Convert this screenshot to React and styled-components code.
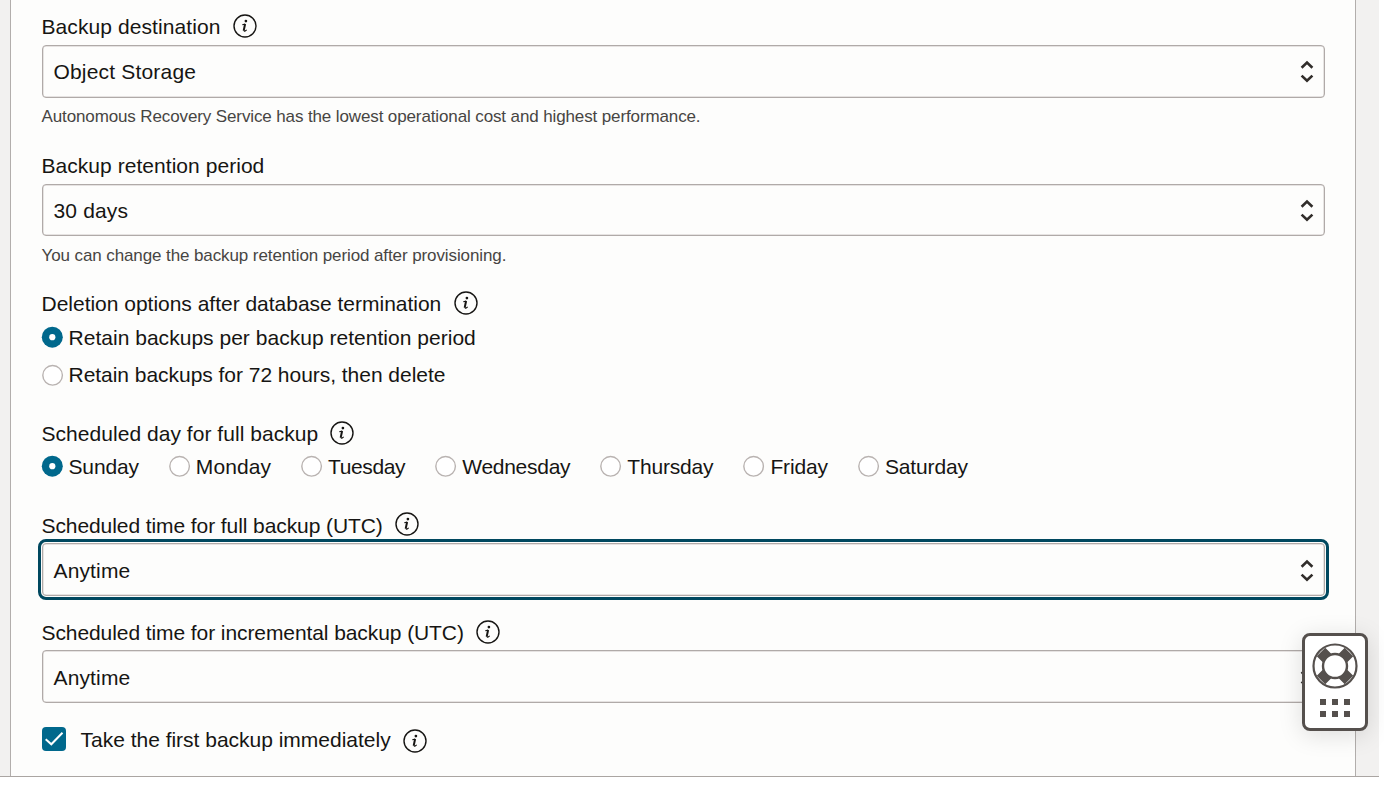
import React from "react";
import styled, { createGlobalStyle, css } from "styled-components";

const Global = createGlobalStyle`
  * { box-sizing: border-box; }
  html, body { margin: 0; height: 785px; overflow: hidden; background: #fff; }
  body { font-family: "Liberation Sans", Arial, sans-serif; font-size: 21px; color: #161513; }
`;

const Page = styled.div`
  position: relative;
  width: 1379px;
  height: 777px;
  display: flex;
  background: #f2f1f0;
  border-bottom: 1px solid #aaa5a2;
`;

const Panel = styled.main`
  width: 1346px;
  margin-left: 10px;
  padding: 9px 30px 0 30.5px;
  background: #fdfdfc;
  border: solid #b2aeac;
  border-width: 0 1px;
  display: flex;
  flex-direction: column;
`;

const Field = styled.section`
  height: ${(p) => p.$height}px;
  flex: none;
`;

const Label = styled.div`
  height: ${(p) => p.$height || 36}px;
  padding-top: ${(p) => p.$drop || 0}px;
  display: flex;
  align-items: center;
`;

const Text = styled.span`
  white-space: nowrap;
  line-height: 24px;
  letter-spacing: ${(p) => p.$track || 0}px;
`;

const SelectBox = styled.div`
  width: 1283px;
  height: 52.5px;
  padding: ${(p) => (p.$low ? 3.2 : 2)}px 10px 0 11px;
  display: flex;
  align-items: center;
  justify-content: space-between;
  border: 1px solid #b0aaa8;
  border-radius: 4px;
  box-shadow: inset 0 0 0 0.5px #cfcac8;
  ${(p) =>
    p.$focused &&
    css`
      outline: 3px solid #00485f;
      outline-offset: 1px;
    `}
`;

const Help = styled.div`
  padding-top: ${(p) => p.$gap || 8}px;
  font-size: 17px;
  line-height: 22px;
  color: #474543;
  white-space: nowrap;
  letter-spacing: ${(p) => p.$track || 0}px;
`;

const RadioGroup = styled.div`
  display: flex;
  flex-direction: ${(p) => (p.$row ? "row" : "column")};
  gap: ${(p) => (p.$row ? 30 : 0)}px;
`;

const RadioItem = styled.label`
  height: 37.5px;
  display: flex;
  align-items: center;
  gap: 6px;
`;

const Dot = styled.svg`
  width: 21px;
  height: 21px;
  flex: none;
  overflow: visible;
`;

const CheckRow = styled.label`
  height: 37px;
  display: flex;
  align-items: center;
`;

const CheckSquare = styled.span`
  width: 24px;
  height: 24px;
  margin: 0 15px 1.5px 0;
  border-radius: 4px;
  background: #00688c;
  display: flex;
`;

const InfoSvg = styled.svg`
  width: 24px;
  height: 24px;
  flex: none;
  margin-left: ${(p) => p.$gap}px;
  margin-top: ${(p) => p.$drop}px;
`;

const HelpWidget = styled.aside`
  position: absolute;
  left: 1302px;
  top: 633px;
  width: 66px;
  height: 98px;
  border: 3px solid #55504d;
  border-radius: 8px;
  background: #fff;
  box-shadow: 0 4px 24px rgba(0, 0, 0, 0.13);
`;

function Info({ drop = -2, gap = 12.7 }) {
  return (
    <InfoSvg viewBox="0 0 24 24" $drop={drop} $gap={gap} fill="none" stroke="#161513">
      <circle cx="12" cy="12" r="11" strokeWidth="1.4" />
      <circle cx="12.9" cy="7.1" r="1.35" fill="#161513" stroke="none" />
      <path d="M9.3 10.7 L12.2 10.1 M11 16.2 Q11 17.5 12.2 17 L13.7 15.9" strokeWidth="1.1" />
      <path d="M12.1 10 L10.7 16.6" strokeWidth="2" />
    </InfoSvg>
  );
}

function Chevrons() {
  return (
    <svg width="14" height="24" viewBox="0 0 14 24" fill="none" stroke="#312d2a" strokeWidth="2.6">
      <path d="M1.6 7.8 L7 2.6 L12.4 7.8 M1.6 15.6 L7 20.8 L12.4 15.6" />
    </svg>
  );
}

function Select({ value, track, focused, low }) {
  return (
    <SelectBox $focused={focused} $low={low}>
      <Text $track={track}>{value}</Text>
      <Chevrons />
    </SelectBox>
  );
}

function Radio({ label, on, track }) {
  return (
    <RadioItem>
      <Dot viewBox="0 0 21 21">
        {on ? (
          <>
            <circle cx="10.3" cy="10.2" r="10.5" fill="#00688c" />
            <circle cx="10.3" cy="10.2" r="3.1" fill="#fff" />
          </>
        ) : (
          <circle cx="10.6" cy="10.3" r="9.8" fill="#fff" stroke="#b9b3b1" strokeWidth="1.4" />
        )}
      </Dot>
      <Text $track={track}>{label}</Text>
    </RadioItem>
  );
}

const days = [
  ["Sunday", -0.15],
  ["Monday", 0.07],
  ["Tuesday", -0.36],
  ["Wednesday", -0.27],
  ["Thursday", -0.18],
  ["Friday", -0.15],
  ["Saturday", -0.13],
];

export default function App() {
  return (
    <>
      <Global />
      <Page>
        <Panel>
          <Field $height={138.5}>
            <Label><Text $track={0.085}>Backup destination</Text><Info /></Label>
            <Select value="Object Storage" track={0.18} />
            <Help $track={-0.12}>Autonomous Recovery Service has the lowest operational cost and highest performance.</Help>
          </Field>
          <Field $height={138.5}>
            <Label><Text $track={0.045}>Backup retention period</Text></Label>
            <Select value="30 days" track={0.15} />
            <Help $gap={9} $track={-0.1}>You can change the backup retention period after provisioning.</Help>
          </Field>
          <Field $height={129.5}>
            <Label $height={33} $drop={3}><Text $track={-0.015}>Deletion options after database termination</Text><Info gap={12.5} /></Label>
            <RadioGroup>
              <Radio on label="Retain backups per backup retention period" track={0.025} />
              <Radio label="Retain backups for 72 hours, then delete" track={-0.035} />
            </RadioGroup>
          </Field>
          <Field $height={91.5}>
            <Label $height={32.5} $drop={4.6}><Text $track={0.04}>Scheduled day for full backup</Text><Info gap={12} /></Label>
            <RadioGroup $row>
              {days.map(([d, t], i) => <Radio key={d} on={i === 0} label={d} track={t} />)}
            </RadioGroup>
          </Field>
          <Field $height={107}>
            <Label $drop={1}><Text $track={-0.085}>Scheduled time for full backup (UTC)</Text><Info gap={12.2} drop={-3} /></Label>
            <Select focused low value="Anytime" track={0.14} />
          </Field>
          <Field $height={107}>
            <Label $drop={1.6}><Text $track={-0.085}>Scheduled time for incremental backup (UTC)</Text><Info gap={12.2} drop={-2.5} /></Label>
            <Select low value="Anytime" track={0.14} />
          </Field>
          <CheckRow>
            <CheckSquare>
              <svg width="24" height="24" viewBox="0 0 24 24" fill="none" stroke="#fff" strokeWidth="2">
                <path d="M3.7 12.3 L9.3 17.3 L20.5 5.8" />
              </svg>
            </CheckSquare>
            <Text $track={-0.01}>Take the first backup immediately</Text>
            <Info drop={3} gap={12.7} />
          </CheckRow>
        </Panel>
        <HelpWidget>
          <svg width="60" height="92" viewBox="0 0 60 92" fill="none" stroke="#55504d">
            <path d="M16 16L22 22M38 38L44 44M44 16L38 22M22 38L16 44" strokeWidth="12" />
            <circle cx="30" cy="30" r="21.5" strokeWidth="2.2" />
            <circle cx="30" cy="30" r="12" strokeWidth="2.4" fill="#fff" />
            <path d="M15 66h6M27 66h6M39 66h6M15 78h6M27 78h6M39 78h6" strokeWidth="6" />
          </svg>
        </HelpWidget>
      </Page>
    </>
  );
}
